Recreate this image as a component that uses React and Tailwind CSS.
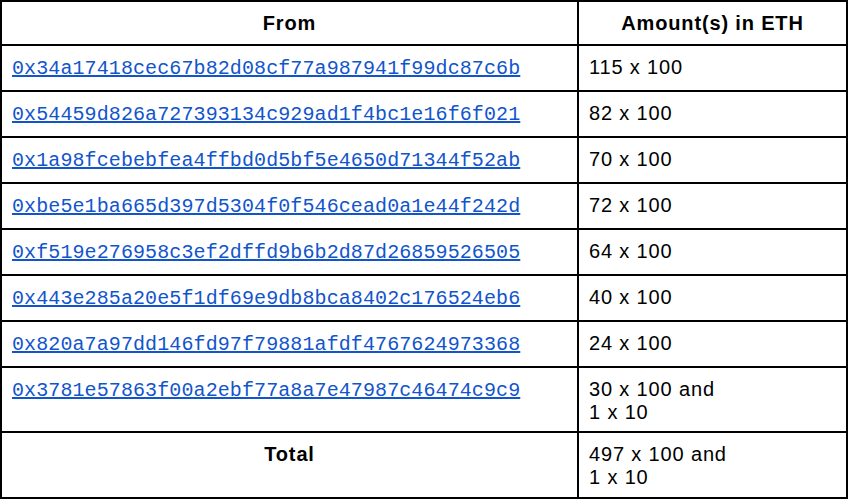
import React from "react";

const rows = [
  { addr: "0x34a17418cec67b82d08cf77a987941f99dc87c6b", amount: ["115 x 100"] },
  { addr: "0x54459d826a727393134c929ad1f4bc1e16f6f021", amount: ["82 x 100"] },
  { addr: "0x1a98fcebebfea4ffbd0d5bf5e4650d71344f52ab", amount: ["70 x 100"] },
  { addr: "0xbe5e1ba665d397d5304f0f546cead0a1e44f242d", amount: ["72 x 100"] },
  { addr: "0xf519e276958c3ef2dffd9b6b2d87d26859526505", amount: ["64 x 100"] },
  { addr: "0x443e285a20e5f1df69e9db8bca8402c176524eb6", amount: ["40 x 100"] },
  { addr: "0x820a7a97dd146fd97f79881afdf4767624973368", amount: ["24 x 100"] },
  { addr: "0x3781e57863f00a2ebf77a8a7e47987c46474c9c9", amount: ["30 x 100 and", "1 x 10"], tall: true },
];

export default function App() {
  return (
    <div className="w-[849px] h-[500px] bg-white">
      <div className="w-[848px] border-2 border-black font-['Liberation_Sans',Arial,sans-serif] text-[20px] leading-[23px] tracking-[0.85px] text-black">
        {/* Header */}
        <div className="flex h-[42px] font-bold">
          <div className="w-[575px] flex items-center justify-center">From</div>
          <div className="flex-1 flex items-center justify-center border-l-2 border-black">
            Amount(s) in ETH
          </div>
        </div>

        {/* Rows */}
        {rows.map((r) => (
          <div
            key={r.addr}
            className={`flex border-t-2 border-black ${r.tall ? "h-[65px]" : "h-[46px]"}`}
          >
            <div className="w-[575px] px-[10px] pt-[10px]">
              <a
                href="#"
                className="font-['Liberation_Mono',monospace] text-[20px] tracking-[0.1px] text-[#1155cc] underline"
              >
                {r.addr}
              </a>
            </div>
            <div className="flex-1 border-l-2 border-black px-[10px] pt-[10px]">
              {r.amount.map((line) => (
                <div key={line}>{line}</div>
              ))}
            </div>
          </div>
        ))}

        {/* Total */}
        <div className="flex h-[66px] border-t-2 border-black">
          <div className="w-[575px] pt-[10px] text-center font-bold">Total</div>
          <div className="flex-1 border-l-2 border-black px-[10px] pt-[10px]">
            <div>497 x 100 and</div>
            <div>1 x 10</div>
          </div>
        </div>
      </div>
    </div>
  );
}
